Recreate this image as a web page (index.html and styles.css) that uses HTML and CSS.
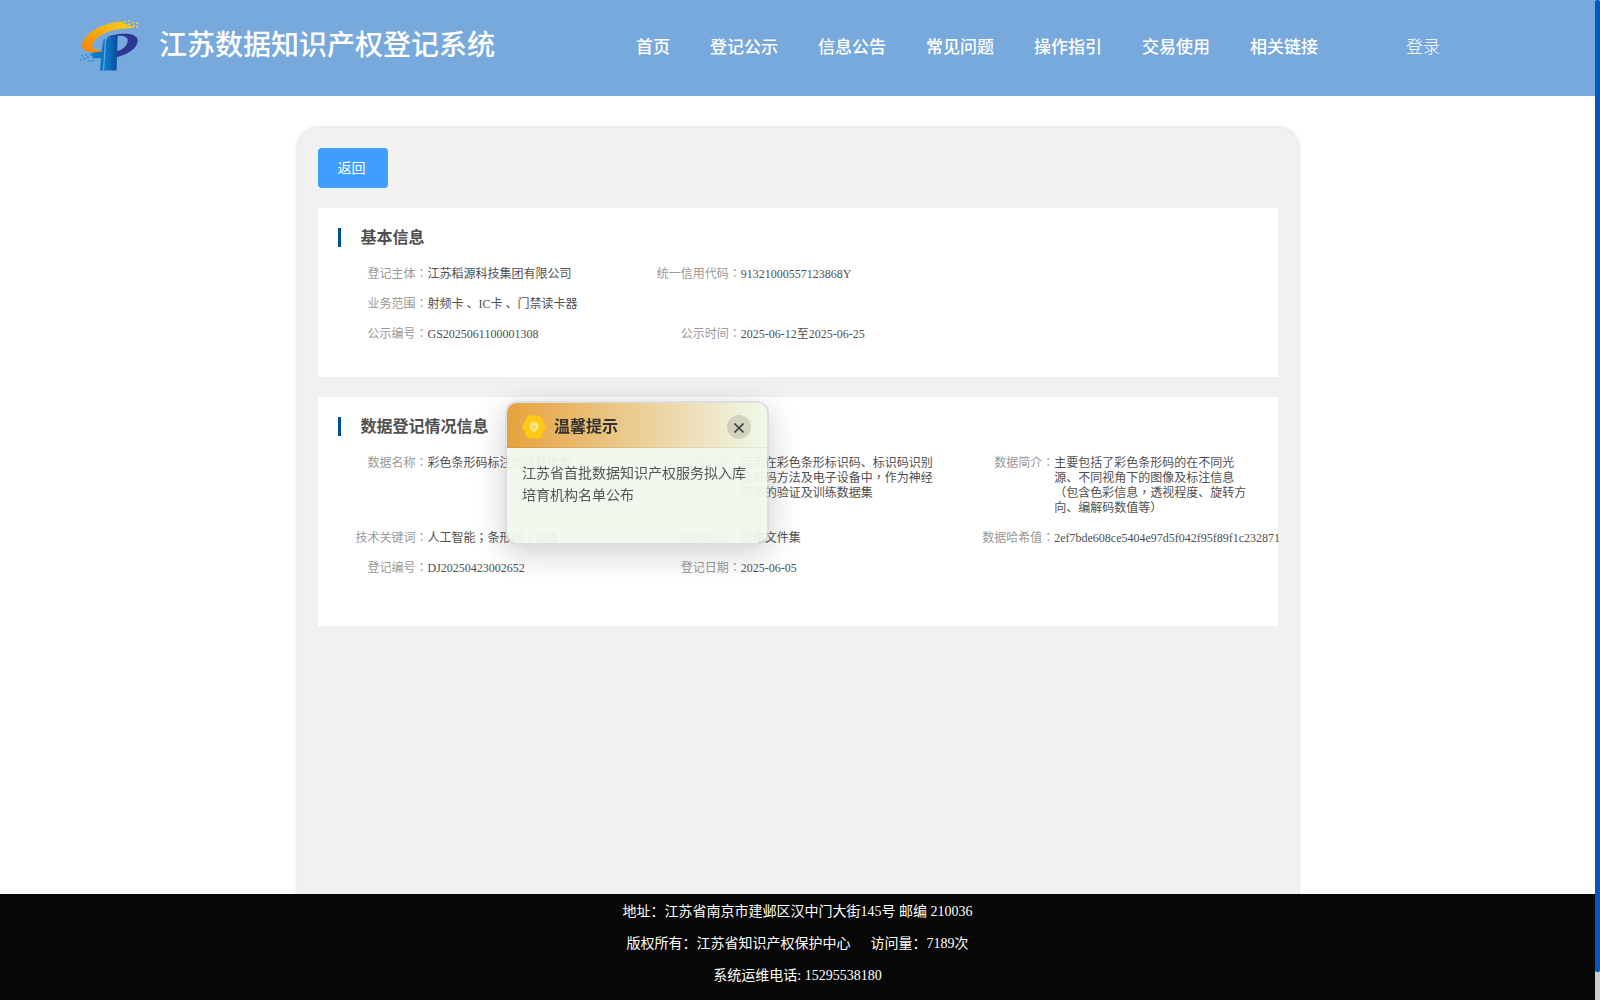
FILE: index.html
```html
<!DOCTYPE html>
<html lang="zh-CN">
<head>
  <meta charset="UTF-8">
  <title>江苏数据知识产权登记系统</title>
  <link rel="stylesheet" href="styles.css">
</head>
<body>
  <header class="header">
    <svg class="logo" viewBox="0 0 60 52" width="60" height="52">
      <defs>
        <linearGradient id="orange" x1="0" y1="1" x2="1" y2="0">
          <stop offset="0" stop-color="#f08200"/>
          <stop offset="1" stop-color="#ffd21f"/>
        </linearGradient>
        <linearGradient id="blue" x1="0" y1="0" x2="1" y2="0">
          <stop offset="0" stop-color="#0a82cc"/>
          <stop offset="1" stop-color="#0b4a9c"/>
        </linearGradient>
      </defs>
      <path fill="url(#orange)" d="M43.300 1.500C20 2.200 2 15.500 2 25.500c0 4.500 4.700 7.500 18 7l1-2.500c-6 0-10.300-2-8.300-6C16 15.500 28 10 45 8.500l9-1-3-2-5 .5 2-2-5-.5z"/>
      <path fill="#ffd21f" d="M44 1h2v1.500h-2zM48 0h2v1.500h-2zM52 2h2v1.500h-2zM48 3.500h2V5h-2zM56 2.500h2V4h-2zM53 5h2v1.500h-2zM56 6h2v1.500h-2z"/>
      <path fill="#2d3694" d="M26 18c7-5 31.700-7 31.700 2.500 0 8.500-11 14-21 16.700V31c6.300-1 11-5.500 11-10.500 0-4-4.700-5-10-4.700z"/>
      <path fill="url(#blue)" d="M26 19.500c3-2.500 8-3.500 11.700-3.700L36.500 50.500H24z"/>
      <path fill="#0a78c4" d="M23.500 19.500l1.500-1-2 32h-3l1-12.500c-3 .5-8 .5-10-.5l3-1.500-5-1 4-1.500-3-.5 11.500-1.500z"/>
      <path fill="#1596dc" d="M1 35h2v1.500H1zM5 34h2v1.500H5zM7 36.500h2V38H7zM3.500 38h2v1.500h-2zM0 39h1.500v1.500H0zM8.500 40h2v1.500h-2zM12 40h2v1.500h-2z"/>
    </svg>
    <h1 class="site-name">江苏数据知识产权登记系统</h1>
    <nav class="nav">
      <a>首页</a>
      <a>登记公示</a>
      <a>信息公告</a>
      <a>常见问题</a>
      <a>操作指引</a>
      <a>交易使用</a>
      <a>相关链接</a>
    </nav>
    <a class="login">登录</a>
  </header>

  <main class="container">
    <button class="back-btn">返回</button>

    <section class="card">
      <h2 class="card-title">基本信息</h2>
      <div class="row">
        <div class="item"><span class="label">登记主体<i lang="zh-TW">：</i></span><span class="value">江苏稻源科技集团有限公司</span></div>
        <div class="item"><span class="label">统一信用代码<i lang="zh-TW">：</i></span><span class="value">91321000557123868Y</span></div>
      </div>
      <div class="row">
        <div class="item"><span class="label">业务范围<i lang="zh-TW">：</i></span><span class="value">射频卡 、IC卡 、门禁读卡器</span></div>
      </div>
      <div class="row">
        <div class="item"><span class="label">公示编号<i lang="zh-TW">：</i></span><span class="value">GS2025061100001308</span></div>
        <div class="item"><span class="label">公示时间<i lang="zh-TW">：</i></span><span class="value">2025-06-12至2025-06-25</span></div>
      </div>
    </section>

    <section class="card card-data">
      <h2 class="card-title">数据登记情况信息</h2>
      <div class="row">
        <div class="item"><span class="label">数据名称<i lang="zh-TW">：</i></span><span class="value">彩色条形码标注图像数据集</span></div>
        <div class="item"><span class="label">应用场景<i lang="zh-TW">：</i></span><span class="value">运用在彩色条形标识码、标识码识别及解码方法及电子设备中<i lang="zh-TW">，</i>作为神经网络的验证及训练数据集</span></div>
        <div class="item"><span class="label">数据简介<i lang="zh-TW">：</i></span><span class="value">主要包括了彩色条形码的在不同光源、不同视角下的图像及标注信息<i lang="zh-TW">（</i>包含色彩信息<i lang="zh-TW">，</i>透视程度、旋转方向、编解码数值等<i lang="zh-TW">）</i></span></div>
      </div>
      <div class="row">
        <div class="item"><span class="label">技术关键词<i lang="zh-TW">：</i></span><span class="value">人工智能<i lang="zh-TW">；</i>条形码<i lang="zh-TW">；</i>训练</span></div>
        <div class="item"><span class="label">数据格式<i lang="zh-TW">：</i></span><span class="value">图像文件集</span></div>
        <div class="item"><span class="label">数据哈希值<i lang="zh-TW">：</i></span><span class="value">2ef7bde608ce5404e97d5f042f95f89f1c232871</span></div>
      </div>
      <div class="row">
        <div class="item"><span class="label">登记编号<i lang="zh-TW">：</i></span><span class="value">DJ20250423002652</span></div>
        <div class="item"><span class="label">登记日期<i lang="zh-TW">：</i></span><span class="value">2025-06-05</span></div>
      </div>
    </section>
  </main>

  <!-- 温馨提示弹窗 -->
  <div class="notice">
    <div class="notice-header">
      <svg class="notice-icon" viewBox="0 0 24 24" width="24" height="24">
        <path fill="#fdc913" d="M6 .5h12L24 12l-6 11.500H6L0 12z"/>
        <circle cx="12" cy="11.500" r="4.500" fill="#ffe68a"/>
        <path fill="none" stroke="#fdc913" d="M10 10.500l2 1.500 2-1.500M12 12v3"/>
        <path fill="#ffe68a" d="M10.500 15h3v2h-3z"/>
      </svg>
      <span class="notice-title">温馨提示</span>
      <span class="notice-close">
        <svg viewBox="0 0 10 10" width="10" height="10"><path d="M.5.5l9 9M9.500.5l-9 9" stroke="#444" stroke-width="1.600"/></svg>
      </span>
    </div>
    <div class="notice-body">江苏省首批数据知识产权服务拟入库培育机构名单公布</div>
  </div>

  <footer class="footer">
    <p>地址：江苏省南京市建邺区汉中门大街145号 邮编 210036</p>
    <p>版权所有：江苏省知识产权保护中心<span class="visits">访问量：7189次</span></p>
    <p>系统运维电话: 15295538180</p>
  </footer>

  <div class="scrollbar"><div class="scrollbar-thumb"></div></div>
</body>
</html>
```
FILE: styles.css
```css
* {
  margin: 0;
  padding: 0;
  box-sizing: border-box;
}

body {
  height: 100vh;
  padding-right: 5px;
  overflow: hidden;
  background: #fff;
  font-family: "Liberation Serif", "Noto Sans CJK SC", serif;
}

.header {
  display: flex;
  align-items: center;
  height: 96px;
  padding-left: 80px;
  background: #78a9dd;
  color: #fff;
}

.logo {
  flex: none;
  margin-bottom: 5px;
}

.site-name {
  margin: 0 0 5px 19px;
  width: 337px;
  font-size: 28px;
  line-height: 40px;
  font-weight: 500;
  white-space: nowrap;
}

.nav {
  display: flex;
  gap: 40px;
  margin-left: 140px;
  font-size: 17px;
  line-height: 24px;
  font-weight: 500;
  white-space: nowrap;
}

.login {
  margin-left: 88px;
  font-size: 17px;
  line-height: 24px;
  font-weight: 300;
}

.container {
  width: 1000px;
  height: 820px;
  margin: 32px auto 0;
  padding: 20px;
  border-radius: 20px;
  background: #f1f1f1;
  box-shadow: 0 0 4px rgba(0, 0, 0, 0.2);
}

.back-btn {
  display: block;
  width: 70px;
  height: 40px;
  border: none;
  border-radius: 4px;
  background: #409eff;
  color: #fff;
  font-family: inherit;
  font-size: 14px;
  padding: 0 2px 2px 0;
}

.card {
  height: 169px;
  margin-top: 20px;
  padding: 20px;
  background: #fff;
}

.card-data {
  height: 229px;
}

.card-title {
  height: 19px;
  margin-bottom: 20px;
  padding-left: 20px;
  border-left: 3px solid #00508f;
  color: #505050;
  font-size: 16px;
  line-height: 19px;
}

.row {
  display: flex;
  margin: 0 -10px 15px;
  font-size: 12px;
  line-height: 15px;
}

.item {
  display: flex;
  flex: 0 0 313.33px;
  width: 313.33px;
  padding: 0 10px;
}

.label {
  flex: none;
  width: 90px;
  text-align: right;
  color: #999;
}

.value {
  flex: none;
  width: 203.33px;
  color: #505050;
}

/* 标点居中显示 */
.label i,
.value i {
  font-family: "Noto Sans CJK TC", sans-serif;
  font-style: normal;
  line-height: 0;
}

.notice {
  position: fixed;
  top: 401px;
  left: 505px;
  width: 264px;
  height: 144px;
  border: 2px solid rgba(205, 208, 210, 0.7);
  border-radius: 12px;
  background: rgba(240, 248, 236, 0.95);
  background-clip: padding-box;
  box-shadow: 0 8px 32px rgba(0, 0, 0, 0.2);
  overflow: hidden;
}

.notice-header {
  display: flex;
  align-items: center;
  height: 45px;
  padding: 3px 16px 0 15px;
  border-bottom: 1px solid rgba(0, 0, 0, 0.06);
  background: linear-gradient(90deg, #e6a23c, #f0f9eb);
}

.notice-title {
  margin-left: 8px;
  color: #333;
  font-size: 16px;
  line-height: 22px;
  font-weight: bold;
}

.notice-close {
  display: flex;
  align-items: center;
  justify-content: center;
  width: 24px;
  height: 24px;
  margin-left: auto;
  padding-top: 3px;
  border-radius: 50%;
  background: rgba(0, 0, 0, 0.12);
}

.notice-body {
  padding: 15px 15px 0;
  color: #555;
  font-size: 14px;
  line-height: 22px;
}

.footer {
  position: fixed;
  left: 0;
  right: 5px;
  bottom: 0;
  height: 106px;
  padding-top: 2px;
  background: #070707;
  color: #fff;
  font-size: 14px;
  line-height: 32px;
  text-align: center;
}

.visits {
  margin-left: 20px;
}

.scrollbar {
  position: fixed;
  top: 0;
  right: 0;
  width: 5px;
  height: 100%;
  background: #ccc;
}

.scrollbar-thumb {
  height: 972px;
  border-radius: 2px;
  background: #0058c4;
}
```
